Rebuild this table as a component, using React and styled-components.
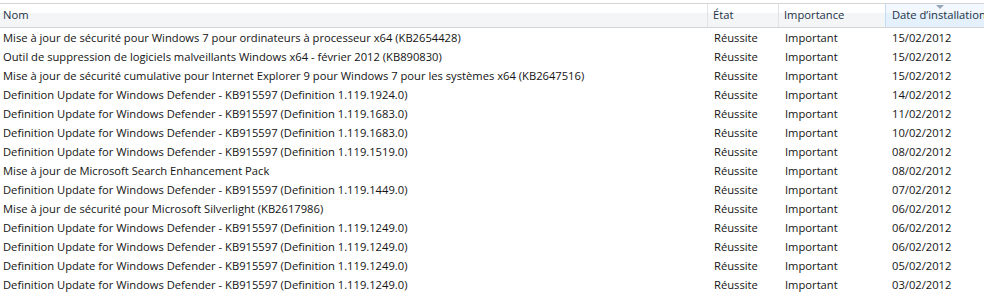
import React from 'react'
import { styled, createGlobalStyle } from 'styled-components'

const GlobalStyle = createGlobalStyle`
  html, body {
    margin: 0;
    padding: 0;
    background: #ffffff;
  }
  body {
    font-family: "Open Sans", "Noto Sans", "Liberation Sans", sans-serif;
    font-size: 11.2px;
    color: #141414;
  }
`

const cols = '707px 71px 107px 1fr'

const updates = [
  ['Mise à jour de sécurité pour Windows 7 pour ordinateurs à processeur x64 (KB2654428)', '15/02/2012'],
  ['Outil de suppression de logiciels malveillants Windows x64 - février 2012 (KB890830)', '15/02/2012'],
  ['Mise à jour de sécurité cumulative pour Internet Explorer 9 pour Windows 7 pour les systèmes x64 (KB2647516)', '15/02/2012'],
  ['Definition Update for Windows Defender - KB915597 (Definition 1.119.1924.0)', '14/02/2012'],
  ['Definition Update for Windows Defender - KB915597 (Definition 1.119.1683.0)', '11/02/2012'],
  ['Definition Update for Windows Defender - KB915597 (Definition 1.119.1683.0)', '10/02/2012'],
  ['Definition Update for Windows Defender - KB915597 (Definition 1.119.1519.0)', '08/02/2012'],
  ['Mise à jour de Microsoft Search Enhancement Pack', '08/02/2012'],
  ['Definition Update for Windows Defender - KB915597 (Definition 1.119.1449.0)', '07/02/2012'],
  ['Mise à jour de sécurité pour Microsoft Silverlight (KB2617986)', '06/02/2012'],
  ['Definition Update for Windows Defender - KB915597 (Definition 1.119.1249.0)', '06/02/2012'],
  ['Definition Update for Windows Defender - KB915597 (Definition 1.119.1249.0)', '06/02/2012'],
  ['Definition Update for Windows Defender - KB915597 (Definition 1.119.1249.0)', '05/02/2012'],
  ['Definition Update for Windows Defender - KB915597 (Definition 1.119.1249.0)', '03/02/2012'],
]

function App() {
  return (
    <>
      <GlobalStyle />
      <ListView>
        <Header>
          <HeaderCell>Nom</HeaderCell>
          <HeaderCell>État</HeaderCell>
          <HeaderCell>Importance</HeaderCell>
          <HeaderCell sorted>
            <SortArrow />
            Date d’installation
          </HeaderCell>
        </Header>
        {updates.map((u, i) => (
          <Row key={i}>
            <Cell first>{u[0]}</Cell>
            <Cell>Réussite</Cell>
            <Cell>Important</Cell>
            <Cell>{u[1]}</Cell>
          </Row>
        ))}
      </ListView>
    </>
  )
}

const ListView = styled.div`
  width: 984px;
  height: 298px;
  overflow: hidden;
  padding-top: 3px;
  box-sizing: border-box;
`

const Header = styled.div`
  display: grid;
  grid-template-columns: ${cols};
  height: 23px;
  border-top: 1px solid #d5d5d5;
  border-bottom: 1px solid #d5d5d5;
  background: linear-gradient(#ffffff 0%, #ffffff 40%, #f4f5f7 41%, #f4f5f7 100%);
`

const HeaderCell = styled.div`
  position: relative;
  display: flex;
  align-items: center;
  padding-left: ${p => (p.sorted ? '6px' : '5px')};
  padding-bottom: 2px;
  white-space: nowrap;
  overflow: hidden;
  color: #1e3246;
  border-left: 1px solid ${p => (p.sorted ? '#c1dcf3' : '#e2e3e5')};
  background: ${p => (p.sorted ? 'linear-gradient(#f2f8fd 0%, #f2f8fd 40%, #e4f0fb 41%, #e4f0fb 100%)' : 'transparent')};
  &:first-child {
    border-left: none;
    padding-left: 3px;
  }
`

const SortArrow = styled.span`
  position: absolute;
  top: 1px;
  left: 50px;
  width: 0;
  height: 0;
  border-left: 4px solid transparent;
  border-right: 4px solid transparent;
  border-top: 4px solid #97a5b8;
`

const Row = styled.div`
  display: grid;
  grid-template-columns: ${cols};
  height: 19px;
  align-items: center;
`

const Cell = styled.div`
  padding-left: ${p => (p.first ? '3px' : '7px')};
  padding-bottom: 1px;
  white-space: nowrap;
  overflow: hidden;
`

export default App
